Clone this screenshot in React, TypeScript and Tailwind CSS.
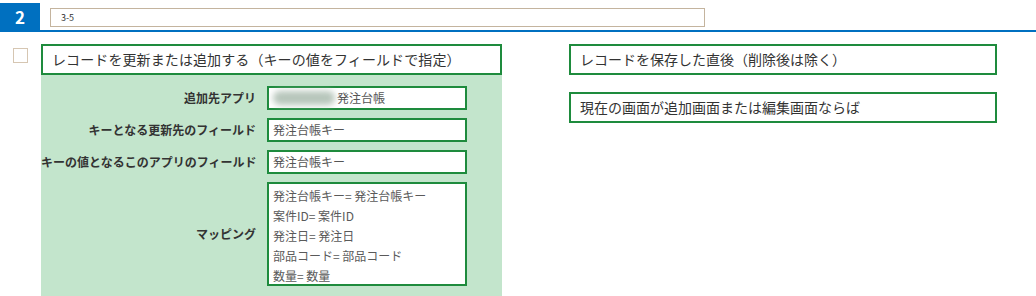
const font = { fontFamily: '"Noto Sans CJK JP", "Liberation Sans", sans-serif' };

type Row = { label: string; value: string; blur?: boolean };

const rows: Row[] = [
    { label: '追加先アプリ', value: '発注台帳', blur: true },
    { label: 'キーとなる更新先のフィールド', value: '発注台帳キー' },
    { label: 'キーの値となるこのアプリのフィールド', value: '発注台帳キー' },
];

const mapping = [
    '発注台帳キー= 発注台帳キー',
    '案件ID= 案件ID',
    '発注日= 発注日',
    '部品コード= 部品コード',
    '数量= 数量',
];

function App() {
    return (
        <div className="w-[1036px] h-[296px] overflow-hidden bg-white text-[#333]" style={font}>
            {/* header */}
            <div className="flex items-start pt-[3px] border-b-2 border-[#0070c0] h-[32px]">
                <div className="w-[40px] h-[27px] bg-[#0070c0] text-white font-bold text-[17px] flex items-center justify-center">
                    2
                </div>
                <div className="ml-[10px] mt-[5px] w-[655px] h-[19px] border border-[#c4b49e] flex items-center pl-[10px] text-[9px] text-[#333]">
                    3-5
                </div>
            </div>

            <div className="flex items-start pt-[12px]">
                <div className="w-[15px] h-[15px] border border-[#d6c6b2] ml-[13px] mt-[4px]" />

                <div className="ml-[13px] w-[461px]">
                    <div className="h-[31px] border-2 border-[#1e8b3d] flex items-center pl-[9px] text-[14px] tracking-[0.1px]">
                        レコードを更新または追加する（キーの値をフィールドで指定）
                    </div>
                    <div className="bg-[#c3e5cc] h-[222px] pt-[11px] flex flex-col gap-[8px]">
                        {rows.map((r) => (
                            <div key={r.label} className="flex items-center">
                                <div className="w-[215px] text-right font-bold text-[12px] whitespace-nowrap">
                                    {r.label}
                                </div>
                                <div className="ml-[11px] w-[200px] h-[24px] border-2 border-[#1e8b3d] bg-white flex items-center pl-[4px] text-[12px] text-[#555]">
                                    {r.blur && (
                                        <span className="w-[62px] h-[14px] mr-[2px] rounded-full bg-[#b7c6bb] blur-[3px]" />
                                    )}
                                    {r.value}
                                </div>
                            </div>
                        ))}
                        <div className="flex items-center">
                            <div className="w-[215px] text-right font-bold text-[12px]">マッピング</div>
                            <div className="ml-[11px] w-[200px] h-[104px] border-2 border-[#1e8b3d] bg-white pl-[4px] pt-[2px] text-[12px] text-[#5a5a5a]">
                                {mapping.map((m) => (
                                    <div key={m} className="h-[20px] leading-[20px] whitespace-nowrap">
                                        {m}
                                    </div>
                                ))}
                            </div>
                        </div>
                    </div>
                </div>

                <div className="ml-[67px] w-[428px] flex flex-col gap-[17px]">
                    <div className="h-[31px] border-2 border-[#1e8b3d] flex items-center pl-[9px] text-[14px]">
                        レコードを保存した直後（削除後は除く）
                    </div>
                    <div className="h-[31px] border-2 border-[#1e8b3d] flex items-center pl-[9px] text-[14px]">
                        現在の画面が追加画面または編集画面ならば
                    </div>
                </div>
            </div>
        </div>
    );
}

export default App;
